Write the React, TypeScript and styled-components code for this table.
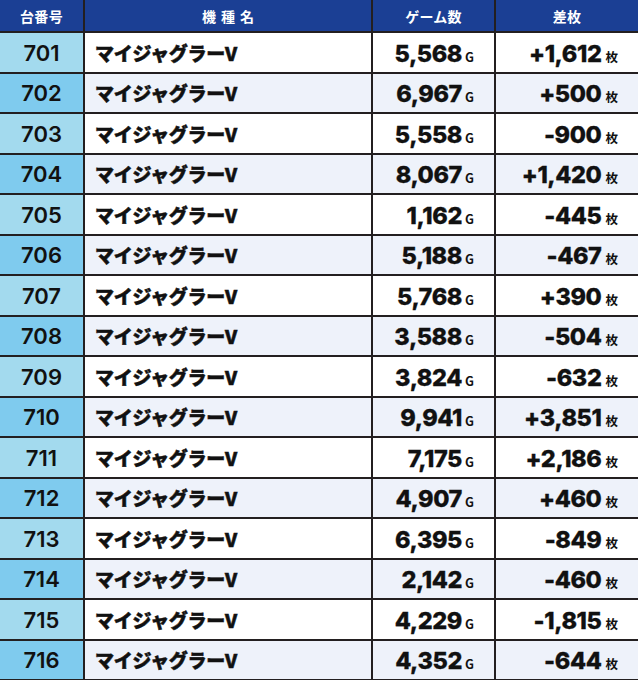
import React from 'react';
import styled, { createGlobalStyle } from 'styled-components';

const GlobalStyle = createGlobalStyle`
    html, body {
        margin: 0;
        padding: 0;
        background: #ffffff;
    }
`;

const Table = styled.div`
    display: grid;
    grid-template-columns: 83px 286px 121px 142px;
    grid-template-rows: 31px repeat(16, 1fr);
    gap: 2px;
    width: 640px;
    height: 680px;
    padding: 0 2px 1px 0;
    box-sizing: border-box;
    background: linear-gradient(to right, #231f20 638px, #ffffff 638px);
`;

const HeadCell = styled.div<{ $spaced?: boolean }>`
    display: flex;
    align-items: center;
    justify-content: center;
    background-color: #1b3f94;
    color: #ffffff;
    font-family: "Noto Sans CJK JP", "Noto Sans", sans-serif;
    font-weight: 700;
    font-size: 14px;
    letter-spacing: ${p => (p.$spaced ? '0.35em' : '0.02em')};
    padding-left: ${p => (p.$spaced ? '0.35em' : '0')};
`;

const NumCell = styled.div<{ $alt: boolean }>`
    display: flex;
    align-items: center;
    justify-content: center;
    background-color: ${p => (p.$alt ? '#7fcbee' : '#a3daee')};
    color: #111111;
    font-family: Inter, "Liberation Sans", sans-serif;
    font-weight: 600;
    font-size: 22px;
    padding-top: 1px;
`;

const Cell = styled.div<{ $alt: boolean; $right?: boolean }>`
    display: flex;
    align-items: center;
    justify-content: ${p => (p.$right ? 'flex-end' : 'flex-start')};
    background-color: ${p => (p.$alt ? '#eef2fa' : '#ffffff')};
    color: #111111;
    padding: ${p => (p.$right ? '0 20px 0 0' : '0 0 0 10px')};
`;

const Name = styled.span`
    font-family: "Noto Sans CJK JP", "Noto Sans", sans-serif;
    font-weight: 900;
    font-size: 19px;
    letter-spacing: -0.3px;
    -webkit-text-stroke: 0.5px #111111;
`;

const Value = styled.span`
    display: flex;
    align-items: baseline;
    font-family: Inter, "Liberation Sans", sans-serif;
    font-weight: 800;
    font-size: 23.5px;
    letter-spacing: -0.4px;
    padding-top: 2px;
    -webkit-text-stroke: 0.3px #111111;
`;

const Unit = styled.span<{ $gap: number }>`
    margin-left: ${p => p.$gap}px;
    font-family: "Noto Sans CJK JP", "Liberation Sans", sans-serif;
    font-weight: 700;
    font-size: 12.5px;
    letter-spacing: 0;
    -webkit-text-stroke: 0;
`;

type Row = { no: number; games: string; diff: string };

const rows: Row[] = [
    { no: 701, games: '5,568', diff: '+1,612' },
    { no: 702, games: '6,967', diff: '+500' },
    { no: 703, games: '5,558', diff: '-900' },
    { no: 704, games: '8,067', diff: '+1,420' },
    { no: 705, games: '1,162', diff: '-445' },
    { no: 706, games: '5,188', diff: '-467' },
    { no: 707, games: '5,768', diff: '+390' },
    { no: 708, games: '3,588', diff: '-504' },
    { no: 709, games: '3,824', diff: '-632' },
    { no: 710, games: '9,941', diff: '+3,851' },
    { no: 711, games: '7,175', diff: '+2,186' },
    { no: 712, games: '4,907', diff: '+460' },
    { no: 713, games: '6,395', diff: '-849' },
    { no: 714, games: '2,142', diff: '-460' },
    { no: 715, games: '4,229', diff: '-1,815' },
    { no: 716, games: '4,352', diff: '-644' },
];

const App: React.FC = () => {
    return (
        <>
            <GlobalStyle />
            <Table>
                <HeadCell>台番号</HeadCell>
                <HeadCell $spaced>機種名</HeadCell>
                <HeadCell>ゲーム数</HeadCell>
                <HeadCell>差枚</HeadCell>
                {rows.map((r, i) => {
                    const alt = i % 2 === 1;
                    return (
                        <React.Fragment key={r.no}>
                            <NumCell $alt={alt}>{r.no}</NumCell>
                            <Cell $alt={alt}>
                                <Name>マイジャグラーV</Name>
                            </Cell>
                            <Cell $alt={alt} $right>
                                <Value>
                                    {r.games}
                                    <Unit $gap={3}>G</Unit>
                                </Value>
                            </Cell>
                            <Cell $alt={alt} $right>
                                <Value>
                                    {r.diff}
                                    <Unit $gap={4}>枚</Unit>
                                </Value>
                            </Cell>
                        </React.Fragment>
                    );
                })}
            </Table>
        </>
    );
};

export default App;
